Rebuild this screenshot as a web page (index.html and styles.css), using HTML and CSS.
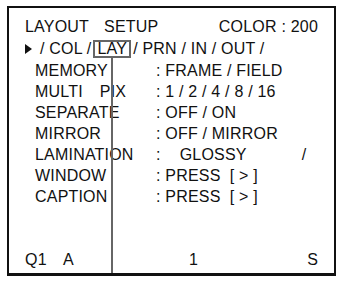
FILE: index.html
```html
<!DOCTYPE html>
<html>
<head>
<meta charset="utf-8">
<link rel="stylesheet" href="styles.css">
</head>
<body>
<div class="screen">
  <div class="row head">
    <span>LAYOUT</span><span class="setup">SETUP</span><span class="color">COLOR : 200</span>
  </div>
  <div class="row tabs">
    <span class="cursor"></span><span class="tab-first">/ COL /</span><span class="sel">LAY</span><span class="tab-rest">/ PRN / IN / OUT /</span>
  </div>
  <div class="menu">
    <span class="label">MEMORY</span><span class="value">: FRAME / FIELD</span>
    <span class="label">MULTI<span class="pix">PIX</span></span><span class="value">: 1 / 2 / 4 / 8 / 16</span>
    <span class="label">SEPARATE</span><span class="value">: OFF / ON</span>
    <span class="label">MIRROR</span><span class="value">: OFF / MIRROR</span>
    <span class="label">LAMINATION</span><span class="value lam"><span>:</span><span class="gloss">GLOSSY</span><span class="slash">/</span></span>
    <span class="label">WINDOW</span><span class="value">: PRESS  [ &gt; ]</span>
    <span class="label">CAPTION</span><span class="value">: PRESS  [ &gt; ]</span>
  </div>
  <div class="row foot">
    <span class="q">Q1</span><span class="a">A</span><span class="num">1</span><span class="s">S</span>
  </div>
</div>
</body>
</html>
```
FILE: styles.css
```css
html, body {
  margin: 0;
  padding: 0;
  background: #fff;
}
body {
  width: 342px;
  height: 281px;
  overflow: hidden;
  font-family: "Liberation Sans", Arial, sans-serif;
  font-size: 16px;
  letter-spacing: 0.2px;
  color: #111;
}
.screen {
  box-sizing: border-box;
  margin: 6px 0 0 7px;
  width: 329px;
  height: 270px;
  border: 2px solid #111;
  border-bottom-width: 3px;
  padding: 8px 16px 3px 16px;
  display: flex;
  flex-direction: column;
  overflow: hidden;
  line-height: 21px;
}
.row {
  display: flex;
  align-items: center;
  white-space: pre;
}
.setup { margin-left: 15px; }
.color { margin-left: auto; }
.tabs { height: 21px; margin-top: 1px; }
.cursor {
  width: 0;
  height: 0;
  border-left: 7px solid #111;
  border-top: 5px solid transparent;
  border-bottom: 5px solid transparent;
  margin-right: 8px;
}
.sel {
  position: relative;
  border: 2px solid #666;
  line-height: 14px;
  padding: 0 2px 0 3px;
  margin: 0 2px 0 1px;
}
.sel::after {
  content: "";
  position: absolute;
  top: 100%;
  left: 16px;
  width: 2px;
  height: 240px;
  background: #666;
  z-index: 2;
}
.menu {
  display: grid;
  grid-template-columns: 121px 1fr;
  padding-left: 10px;
  margin-top: 1px;
  white-space: pre;
}
.label, .value { line-height: 21px; }
.pix { margin-left: 17px; }
.lam { display: flex; }
.gloss { margin-left: 19px; }
.slash { margin-left: 55px; }
.foot { margin-top: auto; }
.q { width: 38px; }
.a { width: 126px; }
.s { margin-left: auto; }
```
